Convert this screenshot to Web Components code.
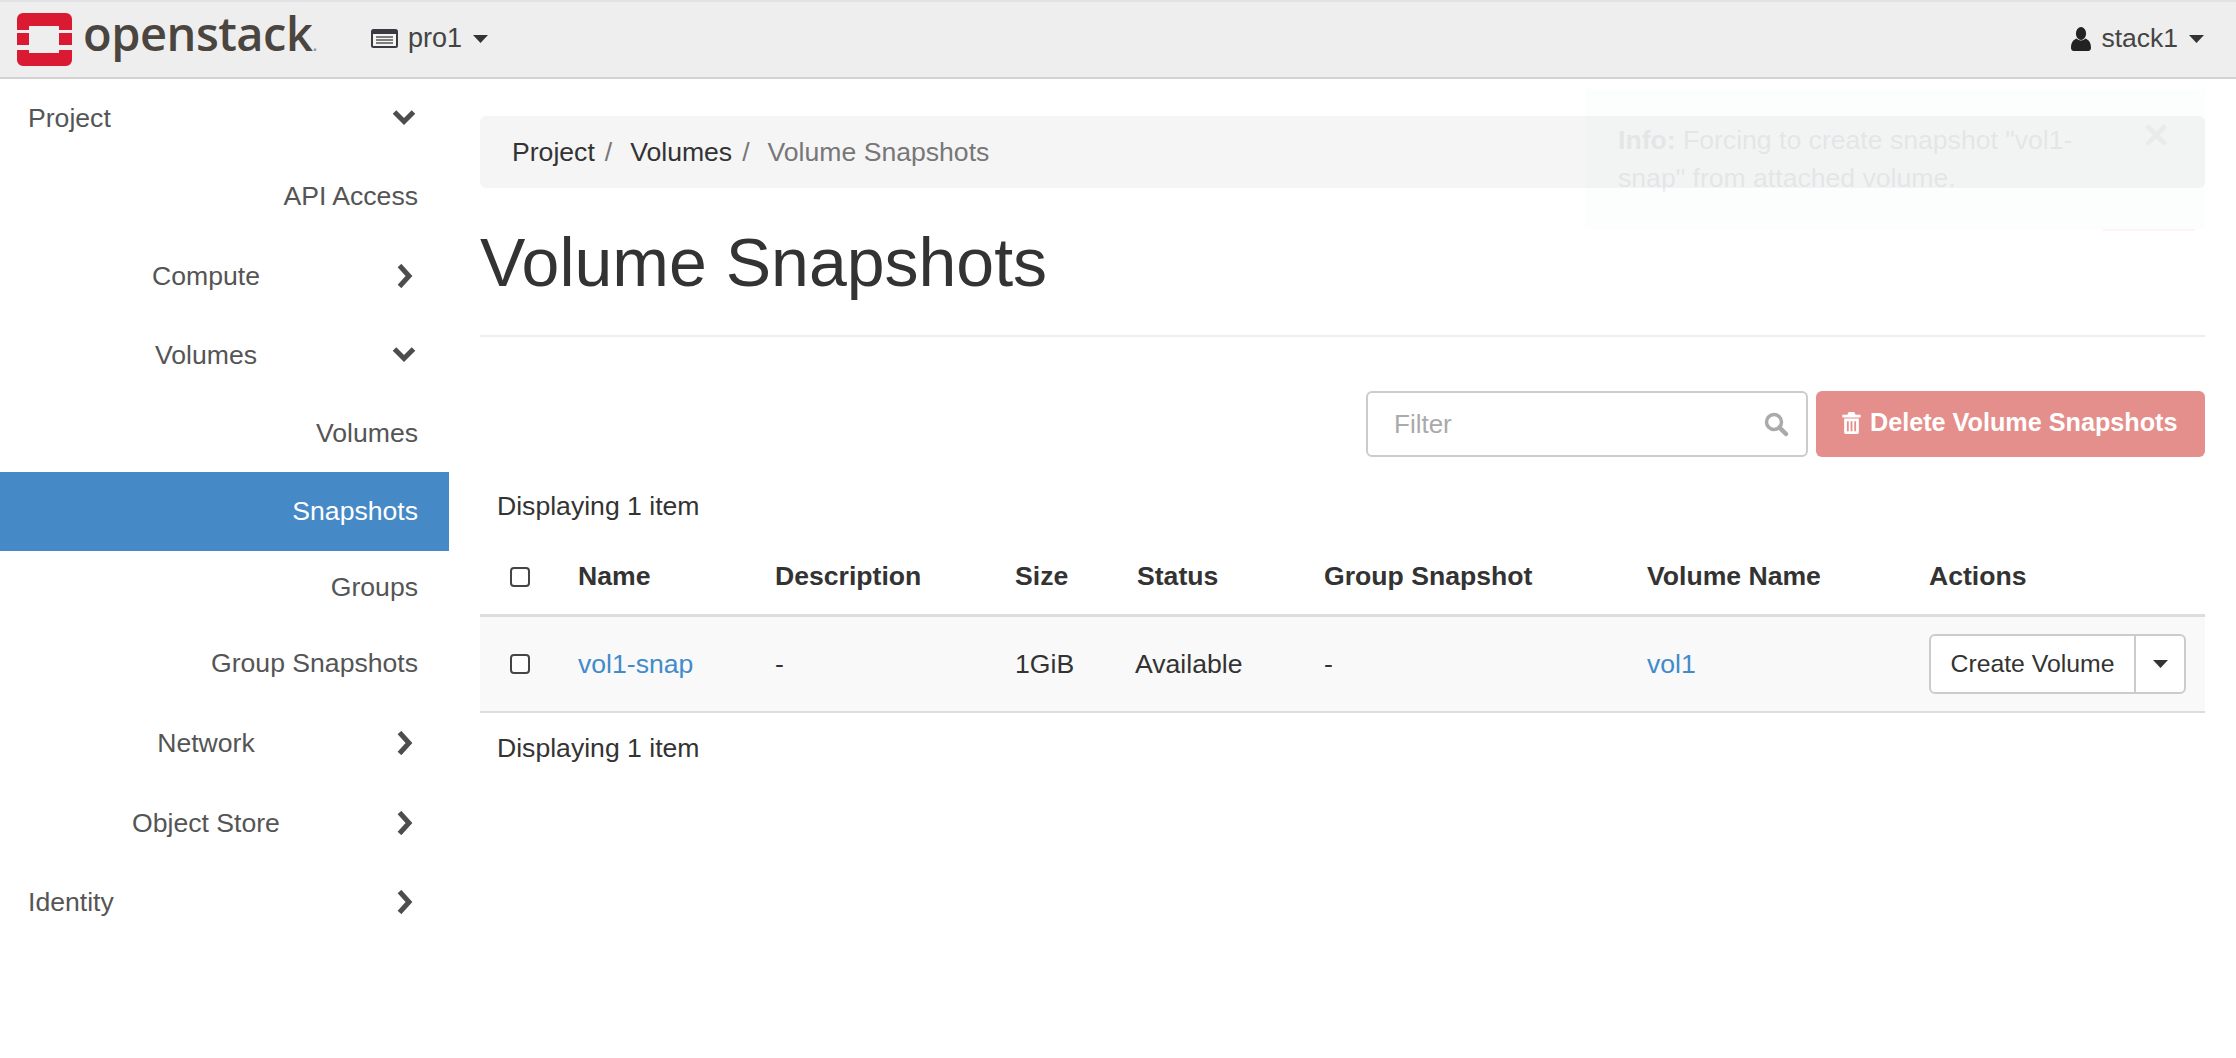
<!DOCTYPE html>
<html lang="en">
<head>
<meta charset="utf-8">
<title>Volume Snapshots</title>
<style>
  html, body { margin: 0; padding: 0; background: #fff; }
  body { font-family: "Liberation Sans", Arial, sans-serif; font-size: 26.6px; color: #333; width: 2236px; height: 1058px; overflow: hidden; position: relative; }
  .layout { display: flex; align-items: flex-start; }
</style>
</head>
<body>
<top-bar project="pro1" user="stack1"></top-bar>
<div class="layout">
  <side-nav>
    <nav-item align="left" h="78" chevron="down">Project</nav-item>
    <nav-item align="right" h="79">API Access</nav-item>
    <nav-item align="center" h="80" chevron="right">Compute</nav-item>
    <nav-item align="center" h="78" chevron="down">Volumes</nav-item>
    <nav-item align="right" h="78">Volumes</nav-item>
    <nav-item align="right" h="79" active>Snapshots</nav-item>
    <nav-item align="right" h="72">Groups</nav-item>
    <nav-item align="right" h="80">Group Snapshots</nav-item>
    <nav-item align="center" h="80" chevron="right">Network</nav-item>
    <nav-item align="center" h="80" chevron="right">Object Store</nav-item>
    <nav-item align="left" h="78" chevron="right">Identity</nav-item>
  </side-nav>
  <snapshots-page></snapshots-page>
</div>
<toast-info><b>Info:</b> Forcing to create snapshot "vol1-<br>snap" from attached volume.</toast-info>

<script>
const caret = `<svg width="15" height="8" viewBox="0 0 15 8"><path d="M0 0h15L7.500 8z" fill="currentColor"/></svg>`;

class TopBar extends HTMLElement {
  constructor() {
    super();
    this.attachShadow({ mode: "open" });
  }

  connectedCallback() {
    this.shadowRoot.innerHTML = /* html */`
    <style>
      :host { display: flex; align-items: center; height: 75px; background: #eee; border-top: 2px solid #e0e2e6; border-bottom: 2px solid #d2d2d2; color: #333; }
      .logo { display: flex; align-items: center; margin-left: 17px; width: 354px; flex: none; }
      .word { font-family: "Open Sans", sans-serif; font-weight: 600; font-size: 47px; line-height: 75px; color: #4b4540; letter-spacing: -0.500px; margin-left: 11px; margin-top: -1px; }
      .word i { font-style: normal; font-size: 18px; color: #9a9693; letter-spacing: 0; }
      .menu { display: flex; align-items: center; font-size: 27px; color: #444; margin-top: -2px; }
      .menu svg.ic { flex: none; }
      .menu span { margin-left: 10px; }
      .menu .c { margin-left: 11px; display: flex; color: #333; }
      .spacer { flex: 1; }
      .user { margin-right: 32px; font-size: 26.500px; }
    </style>
    <div class="logo">
      <svg width="55" height="53" viewBox="0 0 55 53">
        <path fill="#da1a32" d="M6 0h43a6 6 0 0 1 6 6v11H42v-4H12v4H0V6a6 6 0 0 1 6-6zM0 20h12v12H0zM42 20h13v12H42zM0 37h12v3h30v-3h13v10a6 6 0 0 1-6 6H6a6 6 0 0 1-6-6z"/>
      </svg>
      <div class="word">openstack<i>.</i></div>
    </div>
    <div class="menu">
      <svg class="ic" width="27" height="19" viewBox="0 0 27 19">
        <rect x="1" y="1" width="25" height="17" rx="1.500" fill="#f4f4f4" stroke="#3a3a40" stroke-width="2"/>
        <rect x="1" y="1" width="25" height="4" fill="#3a3a40"/>
        <path d="M5 8h17M5 11h17M5 14h17" stroke="#555" stroke-width="1.500"/>
      </svg>
      <span>${this.getAttribute("project")}</span>
      <div class="c">${caret}</div>
    </div>
    <div class="spacer"></div>
    <div class="menu user">
      <svg class="ic" width="20" height="24" viewBox="0 0 22 24" preserveAspectRatio="none">
        <ellipse cx="11" cy="6.500" rx="5.600" ry="6.500" fill="#222"/>
        <path d="M0 21c0-5 2-8 6-9.500 3 2.500 7 2.500 10 0 4 1.500 6 4.500 6 9.500 0 2-1.500 3-3 3H3c-1.500 0-3-1-3-3z" fill="#222"/>
      </svg>
      <span>${this.getAttribute("user")}</span>
      <div class="c">${caret}</div>
    </div>`;
  }
}

class SideNav extends HTMLElement {
  constructor() {
    super();
    this.attachShadow({ mode: "open" });
    this.shadowRoot.innerHTML = /* html */`
    <style>
      :host { display: flex; flex-direction: column; width: 449px; flex: none; }
    </style>
    <slot></slot>`;
  }
}

class NavItem extends HTMLElement {
  constructor() {
    super();
    this.attachShadow({ mode: "open" });
  }

  connectedCallback() {
    const align = this.getAttribute("align") || "right";
    const dir = this.getAttribute("chevron");
    const icons = {
      down: `<path d="M2.500 6 12 15.500 21.500 6" fill="none" stroke="currentColor" stroke-width="5"/>`,
      right: `<path d="M7.500 1.500 17 12 7.500 22.500" fill="none" stroke="currentColor" stroke-width="5"/>`,
    };
    this.shadowRoot.innerHTML = /* html */`
    <style>
      :host { display: flex; align-items: center; height: ${this.getAttribute("h")}px; color: #555; box-sizing: border-box; padding-left: 28px; }
      :host([active]) { background: #4589c7; color: #fff; }
      .label { width: 390px; flex: none; text-align: ${align}; }
      :host([align="center"]) .label, :host([align="left"]) .label { width: 356px; }
      svg { flex: none; margin-left: 8px; color: #4d4d4d; }
    </style>
    <div class="label"><slot></slot></div>
    ${dir ? `<svg width="24" height="24" viewBox="0 0 24 24">${icons[dir]}</svg>` : ""}`;
  }
}

class SnapshotsPage extends HTMLElement {
  constructor() {
    super();
    this.attachShadow({ mode: "open" });
    this.shadowRoot.innerHTML = /* html */`
    <style>
      :host { display: block; width: 1725px; margin-left: 31px; padding-top: 37px; }
      .crumbs { display: flex; align-items: center; height: 72px; background: #f5f5f5; border-radius: 6px; padding-left: 32px; color: #333; box-sizing: border-box; }
      .crumbs i { font-style: normal; color: #777; margin: 0 18px 0 10px; }
      .crumbs .now { color: #777; }
      h1 { font-size: 68px; font-weight: 400; line-height: 76px; margin: 36px 0 0; color: #333; }
      hr { border: 0; border-top: 2px solid #eee; margin: 35px 0 0; }
      .tools { display: flex; justify-content: flex-end; gap: 8px; margin-top: 54px; }
      .filter { display: flex; align-items: center; justify-content: space-between; width: 442px; height: 66px; box-sizing: border-box; border: 2px solid #ccc; border-radius: 6px; padding: 0 17px 0 26px; color: #aaa; background: #fff; font-size: 26px; }
      .del { display: flex; align-items: center; gap: 8px; width: 389px; height: 66px; padding: 0 0 3px 25px; border-radius: 6px; background: #e58f8c; color: #fff; font-weight: 700; font-size: 25.200px; box-sizing: border-box; }
      .count { margin: 0; padding-left: 17px; line-height: 24px; color: #333; }
      .top { margin-top: 37px; }
      .bottom { margin-top: 23px; }
    </style>
    <div class="crumbs"><span>Project</span><i>/</i><span>Volumes</span><i>/</i><span class="now">Volume Snapshots</span></div>
    <h1>Volume Snapshots</h1>
    <hr>
    <div class="tools">
      <div class="filter"><span>Filter</span>
        <svg width="26" height="26" viewBox="0 0 26 26"><circle cx="11" cy="11" r="7.500" fill="none" stroke="#aaa" stroke-width="3.500"/><path d="M16.500 16.500 23 23" stroke="#aaa" stroke-width="4.500" stroke-linecap="round"/></svg>
      </div>
      <div class="del">
        <svg width="21" height="22" viewBox="0 0 20 24"><path fill="#fff" fill-rule="evenodd" d="M7 0h6l1.500 3H20v3H0V3h5.500zM2 7h16v15a2 2 0 0 1-2 2H4a2 2 0 0 1-2-2zm3 3v11h2V10zm4 0v11h2V10zm4 0v11h2V10z"/></svg>
        <span>Delete Volume Snapshots</span>
      </div>
    </div>
    <p class="count top">Displaying 1 item</p>
    <snapshot-table></snapshot-table>
    <p class="count bottom">Displaying 1 item</p>`;
  }
}

class SnapshotTable extends HTMLElement {
  constructor() {
    super();
    this.attachShadow({ mode: "open" });
    this.shadowRoot.innerHTML = /* html */`
    <style>
      :host { display: block; margin-top: 41px; }
      .row { display: grid; grid-template-columns: 98px 197px 240px 122px 187px 323px 282px 1fr; align-items: center; }
      .head { font-weight: 700; height: 35px; border-bottom: 3px solid #ddd; color: #333; padding-bottom: 20px; }
      .body { height: 96px; background: #f9f9f9; border-bottom: 2px solid #ddd; box-sizing: border-box; }
      .box { width: 20px; height: 20px; box-sizing: border-box; border: 2px solid #444; border-radius: 4px; margin-left: 30px; background: #fff; }
      .link { color: #428bca; }
      .avail { margin-left: -2px; }
      .split { display: flex; width: 257px; height: 60px; box-sizing: border-box; border: 2px solid #ccc; border-radius: 6px; background: #fff; color: #333; font-size: 24.800px; }
      .split span { width: 205px; display: flex; align-items: center; justify-content: center; border-right: 2px solid #ccc; flex: none; box-sizing: border-box; }
      .split div { flex: 1; display: flex; align-items: center; justify-content: center; }
    </style>
    <div class="row head">
      <div class="box"></div><div>Name</div><div>Description</div><div>Size</div><div>Status</div><div>Group Snapshot</div><div>Volume Name</div><div>Actions</div>
    </div>
    <div class="row body">
      <div class="box"></div><div class="link">vol1-snap</div><div>-</div><div>1GiB</div><div class="avail">Available</div><div>-</div><div class="link">vol1</div>
      <div class="split"><span>Create Volume</span><div>${caret}</div></div>
    </div>`;
  }
}

class ToastInfo extends HTMLElement {
  constructor() {
    super();
    this.attachShadow({ mode: "open" });
    this.shadowRoot.innerHTML = /* html */`
    <style>
      :host { position: absolute; left: 1585px; top: 89px; width: 620px; height: 140px; box-sizing: border-box; padding: 32px 20px 0 33px; background: rgba(217, 240, 245, 0.08); color: #5f7078; line-height: 38px; }
      .txt { opacity: 0.1; }
      .x { position: absolute; right: 36px; top: 24px; font-size: 44px; line-height: 44px; font-weight: 700; color: #000; opacity: 0.03; }
      .edge { position: absolute; left: 518px; top: 140px; width: 92px; height: 2px; background: #fff3f5; }
    </style>
    <div class="txt"><slot></slot></div>
    <div class="x">×</div>
    <div class="edge"></div>`;
  }
}

customElements.define("top-bar", TopBar);
customElements.define("side-nav", SideNav);
customElements.define("nav-item", NavItem);
customElements.define("snapshots-page", SnapshotsPage);
customElements.define("snapshot-table", SnapshotTable);
customElements.define("toast-info", ToastInfo);
</script>
</body>
</html>
